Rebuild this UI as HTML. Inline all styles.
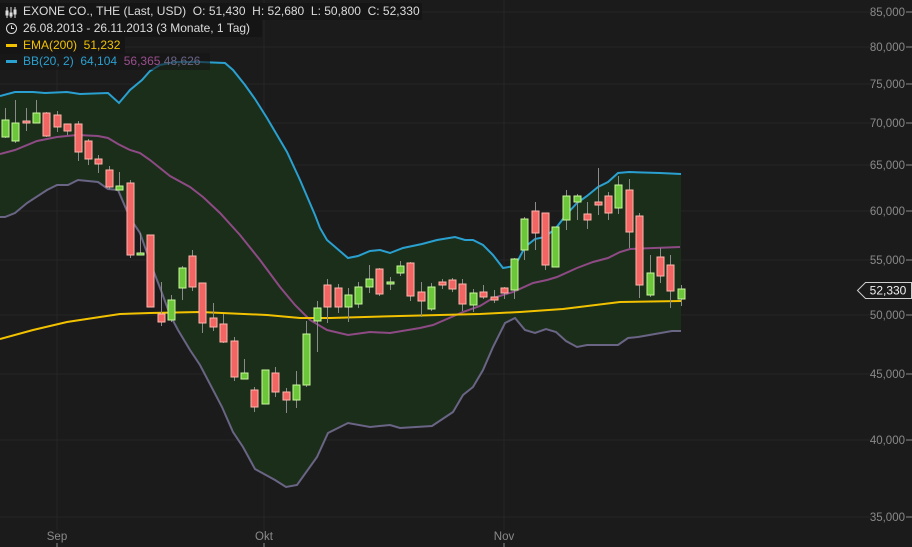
<!DOCTYPE html>
<html><head><meta charset="utf-8">
<style>
html,body{margin:0;padding:0;background:#1c1b1b;}
body{width:912px;height:547px;overflow:hidden;position:relative;font-family:"Liberation Sans",sans-serif;}
svg{position:absolute;left:0;top:0;}
.lg{position:absolute;left:0;height:17px;background:#161515;font-size:12px;line-height:17px;color:#dcdcdc;white-space:nowrap;padding-left:23px;box-sizing:border-box;}
</style></head><body>
<svg id="s" width="912" height="547" viewBox="0 0 912 547"></svg>
<div class="lg" style="top:3px;width:422px">EXONE CO., THE (Last, USD) &nbsp;O: 51,430 &nbsp;H: 52,680 &nbsp;L: 50,800 &nbsp;C: 52,330</div>
<div class="lg" style="top:20px;width:262px">26.08.2013 - 26.11.2013 (3 Monate, 1 Tag)</div>
<div class="lg" style="top:37px;width:125px;color:#f2c200">EMA(200) &nbsp;51,232</div>
<div class="lg" style="top:53px;width:210px;color:#2aa0d0;background:rgba(22,21,21,0.6)">BB(20, 2) &nbsp;64,104 &nbsp;<span style="color:#9a4f8e">56,365</span> <span style="color:#6a6485">48,626</span></div>
<svg width="20" height="70" style="position:absolute;left:0;top:0">
<g stroke="#ddd" fill="none" stroke-width="1">
<line x1="7" y1="7" x2="7" y2="18"/><line x1="11" y1="7" x2="11" y2="18"/><line x1="15" y1="7" x2="15" y2="18"/>
<rect x="6" y="11" width="2" height="4" fill="#ddd"/><rect x="10" y="13" width="2" height="3" fill="#ddd"/><rect x="14" y="10" width="2" height="4" fill="#ddd"/>
<circle cx="11.5" cy="28.5" r="5"/><path d="M11.5 25.5V28.5H14"/>
</g>
<rect x="6" y="44" width="11" height="3" fill="#f2c200"/>
<rect x="6" y="60" width="11" height="3" fill="#2aa0d0"/>
</svg>
<script>
var s=document.getElementById('s'),h='';
var gy=[[12,'85,000'],[47,'80,000'],[84,'75,000'],[123,'70,000'],[165,'65,000'],[211,'60,000'],[260,'55,000'],[315,'50,000'],[374,'45,000'],[440,'40,000'],[517,'35,000']];
gy.forEach(function(g){h+='<line x1="0" y1="'+g[0]+'" x2="872" y2="'+g[0]+'" stroke="#262525" stroke-width="1"/>';
h+='<text x="905" y="'+(g[0]+4)+'" text-anchor="end" font-size="11.5" fill="#8a8a8a" font-family="Liberation Sans,sans-serif">'+g[1]+'</text><line x1="906" y1="'+g[0]+'" x2="912" y2="'+g[0]+'" stroke="#8a8a8a"/>';});
[[57,'Sep'],[264,'Okt'],[504,'Nov']].forEach(function(v){h+='<line x1="'+v[0]+'" y1="0" x2="'+v[0]+'" y2="530" stroke="#262525"/><text x="'+v[0]+'" y="540" text-anchor="middle" font-size="11.5" fill="#8a8a8a" font-family="Liberation Sans,sans-serif">'+v[1]+'</text><line x1="'+v[0]+'" y1="543" x2="'+v[0]+'" y2="547" stroke="#8a8a8a"/>';});
var up=[[0,96],[15,92],[33,92],[45,93],[67,92],[80,94],[108,93],[119,103],[130,90],[142,80],[150,71],[160,65],[175,62],[200,62],[225,63],[233,70],[245,85],[255,99],[267,118],[287,152],[300,180],[315,215],[320,228],[327,240],[348,258],[358,256],[370,251],[380,250],[390,253],[403,248],[422,244],[437,240],[455,237],[465,240],[473,240],[483,245],[493,255],[503,268],[515,266],[525,247],[535,239],[545,237],[556,228],[566,215],[577,203],[587,196],[598,187],[608,182],[618,173],[629,172],[660,173],[681,174]];
var lo=[[0,217],[5,217],[15,213],[27,203],[47,190],[57,185],[68,185],[78,180],[98,182],[108,189],[118,190],[130,218],[140,233],[152,267],[162,293],[170,315],[178,330],[190,350],[200,365],[222,407],[233,432],[243,447],[255,469],[275,480],[286,487],[297,485],[317,457],[328,433],[348,423],[370,427],[390,425],[400,428],[432,426],[453,412],[463,395],[473,387],[483,370],[493,347],[505,323],[515,318],[525,330],[535,333],[546,329],[556,332],[566,341],[577,347],[587,345],[618,345],[628,338],[638,337],[672,331],[681,331]];
var mid=[[0,154],[15,150],[37,141],[57,137],[77,135],[98,136],[108,138],[118,144],[130,150],[140,153],[150,160],[170,176],[190,187],[203,197],[220,213],[240,235],[260,260],[280,287],[295,305],[310,320],[327,330],[348,335],[370,332],[390,333],[420,328],[433,325],[463,312],[480,306],[493,298],[513,292],[533,283],[547,280],[557,277],[577,268],[593,262],[608,258],[620,252],[630,249],[680,247]];
var ema=[[0,339],[33,330],[67,322],[100,317],[120,314],[150,313],[200,312],[267,315],[300,318],[330,318],[400,316],[480,314],[520,312],[563,309],[620,302],[681,301]];
function pts(a){return a.map(function(p){return p[0]+','+p[1]}).join(' ');}
h+='<polygon points="'+pts(up)+' '+pts(lo.slice().reverse())+'" fill="#1a2e1a"/>';
h+='<polyline points="'+pts(up)+'" fill="none" stroke="#2aa0d0" stroke-width="2"/>';
h+='<polyline points="'+pts(lo)+'" fill="none" stroke="#6a6485" stroke-width="2"/>';
h+='<polyline points="'+pts(mid)+'" fill="none" stroke="#8e4a84" stroke-width="2"/>';
h+='<polyline points="'+pts(ema)+'" fill="none" stroke="#f2c200" stroke-width="2"/>';
var c=[[5,120,137,108,138,1],[15,123,141,100,143,1],[26,121,123,108,131,0],[36,113,123,100,123,1],[46,113,136,112,137,0],[57,115,127,111,132,0],[67,124,131,124,135,0],[78,124,152,121,161,0],[88,141,159,139,165,0],[98,159,164,155,173,0],[109,170,187,166,189,0],[119,186,190,172,190,1],[130,183,255,180,258,0],[140,253,254,233,254,1],[150,235,307,235,307,0],[161,314,322,282,326,0],[171,300,320,295,322,1],[182,268,288,266,300,1],[192,256,287,250,291,0],[202,283,323,283,333,0],[213,318,327,303,331,0],[223,324,342,314,343,0],[234,341,377,337,381,0],[244,373,379,359,379,1],[254,390,407,387,412,0],[265,370,404,370,404,1],[275,373,392,367,397,0],[286,392,400,388,413,0],[296,385,400,371,408,1],[306,334,385,321,387,1],[317,308,321,301,352,1],[327,285,307,279,323,0],[338,288,307,284,313,0],[348,295,307,288,322,1],[358,287,304,282,308,1],[369,279,287,265,293,1],[379,269,294,268,296,0],[390,282,284,277,290,1],[400,266,273,261,276,1],[410,263,296,262,301,0],[421,292,301,282,317,0],[431,287,309,283,311,1],[442,282,285,279,289,0],[452,280,289,278,292,0],[462,284,304,279,311,0],[473,293,305,289,312,1],[483,292,297,285,299,0],[494,297,300,290,303,0],[504,288,293,287,299,0],[514,259,290,258,299,1],[524,219,250,217,260,1],[535,211,233,202,250,0],[545,213,265,213,270,0],[555,227,267,227,267,1],[566,196,220,190,230,1],[577,196,202,194,220,1],[587,214,220,202,229,0],[598,202,205,168,215,0],[608,196,213,192,220,0],[618,185,208,176,214,1],[629,190,232,179,248,0],[639,216,285,213,298,0],[650,273,295,255,297,1],[660,257,276,248,283,0],[670,265,291,255,308,0],[681,289,299,285,306,1]];
c.forEach(function(k){var x=k[0];h+='<line x1="'+(x+0.5)+'" y1="'+k[3]+'" x2="'+(x+0.5)+'" y2="'+k[4]+'" stroke="#8a8a8a"/>';
var ht=Math.max(k[2]-k[1],2);h+='<rect x="'+(x-3)+'" y="'+k[1]+'" width="7" height="'+ht+'" fill="'+(k[5]?'#6cc63a':'#f26563')+'" stroke="'+(k[5]?'#c8f59a':'#ffb5ac')+'" stroke-width="1"/>';});
h+='<path d="M857.5 290.5 L865.5 282.5 H911.5 V298.5 H865.5 Z" fill="#1c1b1b" stroke="#cfcfcf"/><text x="888" y="294.5" text-anchor="middle" font-size="12" fill="#f0f0f0" font-family="Liberation Sans,sans-serif">52,330</text>';
s.innerHTML=h;
</script>
</body></html>
